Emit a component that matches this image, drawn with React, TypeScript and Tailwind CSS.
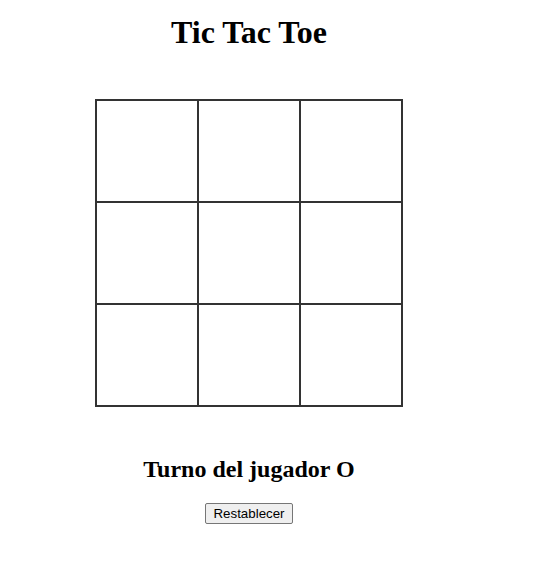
import { useState } from 'react';

type Cell = 'X' | 'O' | null;

export default function App() {
  const [cells, setCells] = useState<Cell[]>(Array(9).fill(null));
  const [turn, setTurn] = useState<'X' | 'O'>('O');

  const play = (i: number) => {
    if (cells[i]) return;
    const next = [...cells];
    next[i] = turn;
    setCells(next);
    setTurn(turn === 'O' ? 'X' : 'O');
  };

  const reset = () => {
    setCells(Array(9).fill(null));
    setTurn('O');
  };

  return (
    <div className="w-[498px] flex flex-col items-center bg-white text-black font-['Liberation_Serif',serif]">
      <h1 className="mt-[14px] text-[32px] leading-[36px] font-bold">Tic Tac Toe</h1>

      {/* Board */}
      <div className="mt-[49px] grid grid-cols-3 border border-[#333]">
        {cells.map((c, i) => (
          <div
            key={i}
            onClick={() => play(i)}
            className="w-[102px] h-[102px] border border-[#333] flex items-center justify-center text-[48px] font-bold cursor-pointer"
          >
            {c}
          </div>
        ))}
      </div>

      <h2 className="mt-[48px] text-[24px] leading-[28px] font-bold">Turno del jugador {turn}</h2>

      <button
        onClick={reset}
        className="mt-[20px] h-[21px] px-[7px] bg-[#efefef] border border-[#767676] rounded-[2px] text-[13.33px] leading-[16px] font-['Liberation_Sans',Arial,sans-serif] text-black hover:bg-[#e5e5e5]"
      >
        Restablecer
      </button>
    </div>
  );
}
